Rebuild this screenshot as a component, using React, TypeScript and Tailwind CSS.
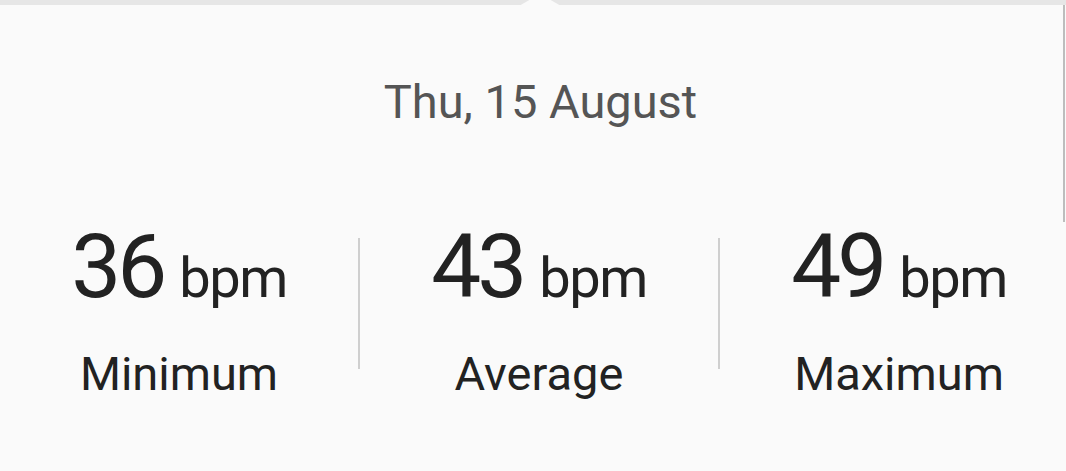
const stats = [
  { value: "36", label: "Minimum" },
  { value: "43", label: "Average" },
  { value: "49", label: "Maximum" },
];

function Stat({ value, label }: { value: string; label: string }) {
  return (
    <div className="w-[358px] shrink-0 flex flex-col items-center">
      <div className="flex items-baseline gap-[16px] leading-none text-[#222] font-[Roboto,sans-serif]">
        <span className="text-[89px] leading-none tracking-[-4px]">{value}</span>
        <span className="text-[56px] leading-none tracking-[-1.5px]">bpm</span>
      </div>
      <div className="mt-[39px] text-[47px] leading-none text-[#222] font-[Roboto,sans-serif]">{label}</div>
    </div>
  );
}

export default function App() {
  return (
    <div className="w-[1066px] h-[471px] bg-[#fafafa] relative overflow-hidden">
      <div className="h-[5px] bg-[#e6e6e6] relative">
        <svg className="absolute left-[519px] top-0" width="42" height="6" viewBox="0 0 42 6">
          <polygon points="0,6 12,-1 30,-1 42,6" fill="#fafafa" />
        </svg>
      </div>

      <div className="mt-[73px] pl-[15px] text-center text-[47px] leading-none text-[#555] font-[Roboto,sans-serif]">
        Thu, 15 August
      </div>

      <div className="mt-[97px] flex">
        {stats.map((s, i) => (
          <div key={s.label} className="flex">
            {i > 0 && <div className="w-[2px] h-[131px] mt-[16px] bg-[#cfcfcf] shrink-0" />}
            <Stat value={s.value} label={s.label} />
          </div>
        ))}
      </div>

      {/* scrollbar */}
      <div className="absolute right-[1px] top-[5px] w-[2px] h-[217px] bg-[#bdbdbd]" />
    </div>
  );
}
